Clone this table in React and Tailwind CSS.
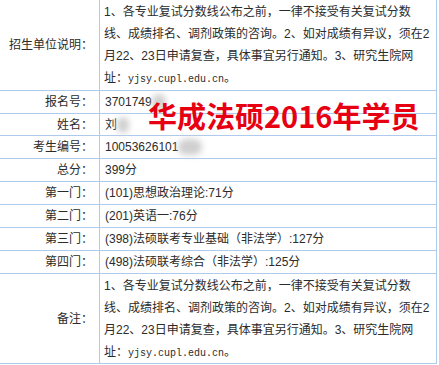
const note = [
  '1、各专业复试分数线公布之前，一律不接受有关复试分数',
  '线、成绩排名、调剂政策的咨询。2、如对成绩有异议，须在2',
  '月22、23日申请复查，具体事宜另行通知。3、研究生院网',
]

function LongNote() {
  return (
    <div className="pl-[4px] py-[1px] leading-[22px]">
      {note.map((line) => (
        <div key={line} className="whitespace-nowrap">{line}</div>
      ))}
      <div className="whitespace-nowrap">
        址：<span className="font-['Liberation_Mono',monospace] text-[10px]">yjsy.cupl.edu.cn</span>。
      </div>
    </div>
  )
}

function Blur({ w }) {
  return <span className={`inline-block h-[16px] ${w} rounded-full bg-[#cfcfcf] blur-[3px] align-middle`} />
}

function Row({ label, children, h = 'h-[23px]' }) {
  return (
    <div className={`flex ${h} border-b border-[#aecaec]`}>
      <div className="w-[100px] shrink-0 border-r border-[#aecaec] flex items-center justify-end pr-[6px]">
        {label}
      </div>
      <div className="flex-1 flex items-center pl-[5px] whitespace-nowrap">{children}</div>
    </div>
  )
}

export default function App() {
  return (
    <div className="relative w-[439px] h-[365px] bg-white overflow-hidden text-[12px] text-[#2b2b2b] font-['Liberation_Sans','Noto_Sans_CJK_SC',sans-serif]">
      <div className="w-[437px] border-r border-[#aecaec]">
        <div className="flex h-[91px] border-b border-[#aecaec]">
          <div className="w-[100px] shrink-0 border-r border-[#aecaec] flex items-center justify-end pr-[6px]">
            招生单位说明：
          </div>
          <div className="flex-1"><LongNote /></div>
        </div>
        <Row label="报名号：">
          3701749<Blur w="w-[14px]" />
        </Row>
        <Row label="姓名：" h="h-[22px]">
          刘<Blur w="w-[12px]" />
        </Row>
        <Row label="考生编号：">
          10053626101<Blur w="w-[24px]" />
        </Row>
        <Row label="总分：">399分</Row>
        <Row label="第一门：">(101)思想政治理论:71分</Row>
        <Row label="第二门：">(201)英语一:76分</Row>
        <Row label="第三门：">(398)法硕联考专业基础（非法学）:127分</Row>
        <Row label="第四门：">(498)法硕联考综合（非法学）:125分</Row>
        <div className="flex h-[90px] border-b border-[#aecaec]">
          <div className="w-[100px] shrink-0 border-r border-[#aecaec] flex items-center justify-end pr-[6px]">
            备注：
          </div>
          <div className="flex-1"><LongNote /></div>
        </div>
      </div>

      {/* watermark */}
      <div className="absolute left-[148px] top-[100px] text-[29px] leading-[31px] font-bold text-[#e60012] font-['Noto_Sans_CJK_SC',sans-serif] whitespace-nowrap">
        华成法硕2016年学员
      </div>
    </div>
  )
}
